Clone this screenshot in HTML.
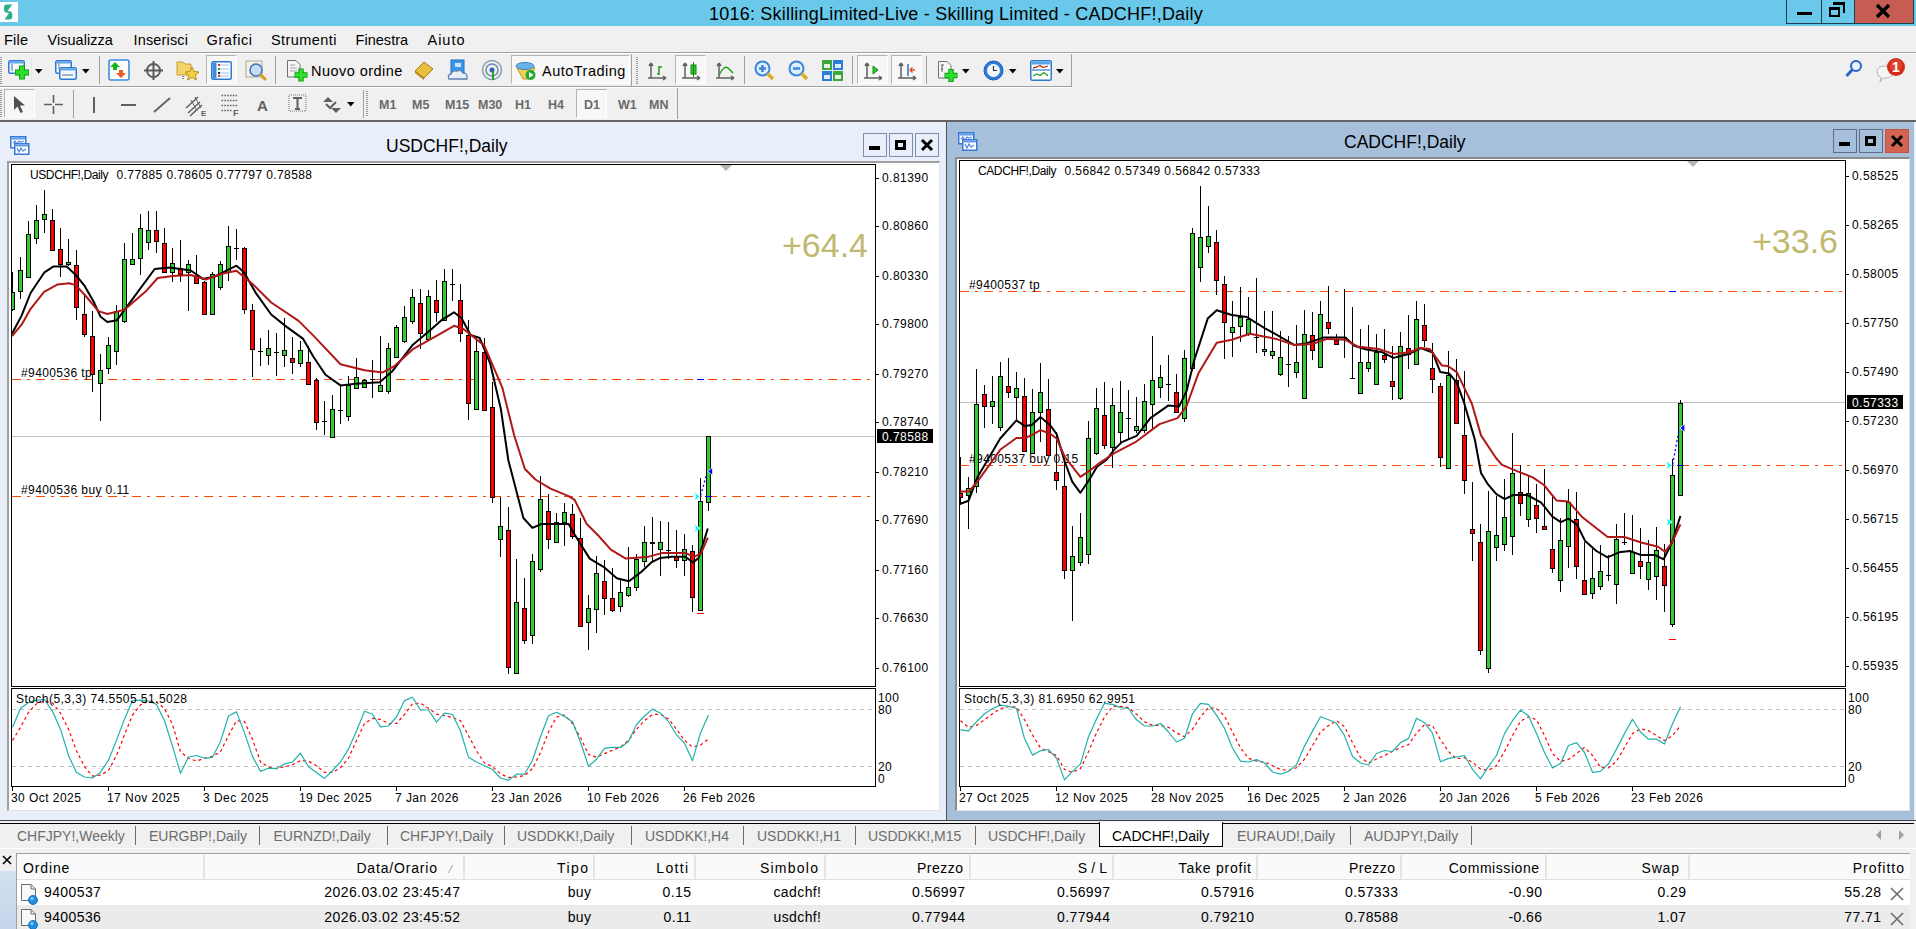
<!DOCTYPE html>
<html><head><meta charset="utf-8">
<style>
*{margin:0;padding:0;box-sizing:border-box}
html,body{width:1916px;height:929px;overflow:hidden;background:#F0F0F0;font-family:"Liberation Sans",sans-serif;color:#000}
.a{position:absolute}
.menu span{position:absolute;top:31.5px;font-size:14.5px;line-height:16px}
.tf{position:absolute;top:98px;font-size:12.5px;font-weight:bold;color:#6A6A6A;line-height:14px}
.ax{font-family:"Liberation Sans",sans-serif;font-size:12px;fill:#000;letter-spacing:0.45px}
.big{font-family:"Liberation Sans",sans-serif;font-size:34px;fill:#C0B970}
.ol{font-family:"Liberation Sans",sans-serif;font-size:12px;fill:#000;letter-spacing:0.4px}
.tab{position:absolute;top:828px;font-size:14px;line-height:16px;color:#6D6D6D}
.tsep{position:absolute;top:826px;width:1px;height:19px;background:#6D6D6D}
.th{position:absolute;top:860px;font-size:14px;line-height:16px;text-align:right}
.td{position:absolute;font-size:14px;line-height:16px;text-align:right}
.csep{position:absolute;top:855px;width:2px;height:24px;background:#E4E4E4}
.sep{position:absolute;width:1px;background:#A0A0A0}
.wbtn{position:absolute;width:24px;height:24px;border:1px solid #7F8DA8}
</style></head><body>
<!-- title bar -->
<div class="a" style="left:0;top:0;width:1916px;height:26px;background:#6AC9EA"></div>
<div class="a" style="left:0;top:2px;width:18px;height:20px;background:#fff"></div>
<svg class="a" style="left:0;top:0" width="20" height="26"><path d="M12.3,4.5 L7,4.5 Q4,4.5 4,7.5 L4,10 Q4,12 6,12.5 L9,13 L4.5,19.5 L9.5,19.5 Q12.3,19.5 12.3,16.5 L12.3,14 Q12.3,12 10.5,11.5 L7.5,11 Z" fill="#2BB08C"/></svg>
<div class="a" style="left:709px;top:4px;font-size:18px;line-height:20px;white-space:nowrap;letter-spacing:0.21px">1016: SkillingLimited-Live - Skilling Limited - CADCHF!,Daily</div>
<div class="a" style="left:1786px;top:0;width:36px;height:24px;border:1px solid #1F3F4F;border-top:0;background:#6AC9EA"></div>
<div class="a" style="left:1797px;top:12px;width:15px;height:3px;background:#000"></div>
<div class="a" style="left:1821px;top:0;width:33px;height:24px;border-bottom:1px solid #1F3F4F;border-left:1px solid #1F3F4F;background:#6AC9EA"></div>
<div class="a" style="left:1829px;top:7px;width:11px;height:10px;border:2px solid #000;border-top-width:3px"></div>
<div class="a" style="left:1833px;top:2px;width:12px;height:11px;border:2px solid #000;border-left:0;border-bottom:0;border-top-width:3px"></div>
<div class="a" style="left:1854px;top:0;width:60px;height:24px;background:#C65C52;border:1px solid #1F3F4F;border-top:0"></div>
<svg class="a" style="left:1874px;top:2px" width="18" height="18"><path d="M3,3 L15,15 M15,3 L3,15" stroke="#000" stroke-width="3.4"/></svg>
<!-- menu -->
<div class="menu"><span style="left:4.0px;letter-spacing:0.26px">File</span><span style="left:47.5px;letter-spacing:0.03px">Visualizza</span><span style="left:133.5px;letter-spacing:0.16px">Inserisci</span><span style="left:206.5px;letter-spacing:0.61px">Grafici</span><span style="left:271.0px;letter-spacing:0.43px">Strumenti</span><span style="left:355.5px;letter-spacing:0.04px">Finestra</span><span style="left:427.5px;letter-spacing:0.98px">Aiuto</span></div>
<div class="a" style="left:0;top:52px;width:1916px;height:1px;background:#A0A0A0"></div>
<div class="a" style="left:0;top:53px;width:1916px;height:1px;background:#FFF"></div>
<div class="a" style="left:0;top:86px;width:1072px;height:1px;background:#A0A0A0"></div>
<div class="a" style="left:0;top:87px;width:1072px;height:1px;background:#FFF"></div>
<div class="a" style="left:1071px;top:54px;width:1px;height:33px;background:#A0A0A0"></div>
<div class="a" style="left:677px;top:88px;width:1px;height:31px;background:#A0A0A0"></div>
<!-- TOOLBAR1 -->
<div class="a" style="left:0px;top:57px;width:2px;height:27px;background:repeating-linear-gradient(#9A9A9A 0 1px,transparent 1px 2px)"></div>
<svg class="a" style="left:8px;top:59px" width="24" height="22" viewBox="0 0 24 22"><rect x="0.75" y="1.75" width="15.5" height="12.5" rx="1.5" fill="#F4F8FC" stroke="#2B7BD0" stroke-width="1.5"/><rect x="1.5" y="2.5" width="14" height="2" fill="#5FA5E8"/><path d="M4,5 V12" stroke="#7C9CC0" stroke-width="1.5"/><path d="M7.0,13.5 H21.0 M14,6.5 V20.5" stroke="#0B9A0B" stroke-width="5.9" fill="none"/><path d="M7.7,13.5 H20.3 M14,7.2 V19.8" stroke="#2EE02E" stroke-width="3.9" fill="none"/></svg>
<svg class="a" style="left:35px;top:69px" width="8" height="5" viewBox="0 0 8 5"><path d="M0,0 L7.5,0 L3.75,4.5 Z" fill="#000"/></svg>
<div class="a" style="left:31px;top:58px;width:1px;height:24px;background:#DCE8F5"></div>
<svg class="a" style="left:55px;top:59px" width="23" height="22" viewBox="0 0 23 22"><rect x="0.75" y="1.75" width="15.5" height="12.5" rx="1.5" fill="#F4F8FC" stroke="#2B7BD0" stroke-width="1.5"/><rect x="1.5" y="2.5" width="14" height="2" fill="#5FA5E8"/><path d="M4,4 V10 H14" stroke="#7C9CC0" stroke-width="1.2" fill="none"/><rect x="4.75" y="8.75" width="16.5" height="11.5" rx="1.5" fill="#F4F8FC" stroke="#2B7BD0" stroke-width="1.5"/><rect x="5.5" y="9.5" width="15" height="2" fill="#5FA5E8"/><path d="M7,16 H18" stroke="#7C9CC0" stroke-width="1.5"/></svg>
<svg class="a" style="left:82px;top:69px" width="8" height="5" viewBox="0 0 8 5"><path d="M0,0 L7.5,0 L3.75,4.5 Z" fill="#000"/></svg>
<div class="a" style="left:99px;top:56px;width:1px;height:28px;background:#A0A0A0"></div>
<svg class="a" style="left:108px;top:59px" width="22" height="22" viewBox="0 0 22 22"><rect x="1" y="1" width="20" height="20" rx="2" fill="#fff" stroke="#3C8CE0" stroke-width="1.6"/><path d="M7,3 L12,8 H9 V11 H5 V8 H2 Z" fill="#18B418"/><path d="M13,19 L18,14 H15 V11 H11 V14 H8 Z" fill="#F05A28"/></svg>
<svg class="a" style="left:143px;top:60px" width="21" height="21" viewBox="0 0 21 21"><circle cx="10.5" cy="10.5" r="6.5" fill="none" stroke="#5A5A5A" stroke-width="2"/><path d="M10.5,1 V20 M1,10.5 H20" stroke="#5A5A5A" stroke-width="2"/></svg>
<svg class="a" style="left:176px;top:59px" width="24" height="22" viewBox="0 0 24 22"><path d="M1,3 H7 L9,5 H15 V16 H1 Z" fill="#F3D46A" stroke="#C8A030"/><path d="M16,8 L18,12.5 L23,13 L19.3,16.2 L20.4,21 L16,18.5 L11.6,21 L12.7,16.2 L9,13 L14,12.5 Z" fill="#F5D040" stroke="#B8901A"/><path d="M7,17 V21" stroke="#333" stroke-dasharray="1,1"/></svg>
<div class="a" style="left:206px;top:55px;width:31px;height:29px;border:1px solid #B4B4B4;border-right-color:#fff;border-bottom-color:#fff;background:#F7F7F7"></div>
<svg class="a" style="left:211px;top:61px" width="21" height="19" viewBox="0 0 21 19"><rect x="0.75" y="0.75" width="19.5" height="17.5" rx="1.5" fill="#fff" stroke="#2B7BD0" stroke-width="1.5"/><rect x="1.5" y="1.5" width="4" height="16" fill="#3D8BDB"/><path d="M8,4 H18 M8,8 H18 M8,12 H18 M8,15 H18" stroke="#9CC4EE" stroke-width="1"/><rect x="7" y="3" width="2" height="2" fill="#E03030"/><rect x="7" y="7" width="2" height="2" fill="#28A028"/><rect x="7" y="11" width="2" height="2" fill="#222"/><rect x="7" y="14" width="2" height="2" fill="#E03030"/></svg>
<svg class="a" style="left:245px;top:59px" width="24" height="24" viewBox="0 0 24 24"><rect x="1" y="2" width="16" height="16" fill="#F4F0E6" stroke="#B0A890"/><circle cx="11" cy="11" r="6" fill="#C8DCF4" stroke="#3C78C8" stroke-width="1.6"/><path d="M15,15 L21,21" stroke="#D2A020" stroke-width="3"/></svg>
<div class="a" style="left:275px;top:56px;width:1px;height:28px;background:#A0A0A0"></div>
<svg class="a" style="left:286px;top:59px" width="22" height="24" viewBox="0 0 22 24"><path d="M1.5,1.5 H10 L14,5.5 V18 H1.5 Z" fill="#F6F6F6" stroke="#707070"/><path d="M4,6 H9 M4,9 H11 M4,12 H11" stroke="#A0A0A0"/><path d="M8.5,16 H21.5 M15,9.5 V22.5" stroke="#0B9A0B" stroke-width="5.4" fill="none"/><path d="M9.2,16 H20.8 M15,10.2 V21.8" stroke="#2EE02E" stroke-width="3.4" fill="none"/></svg>
<div class="a" style="left:311px;top:62.5px;font-size:14.5px;line-height:16px;white-space:nowrap;letter-spacing:0.46px">Nuovo ordine</div>
<svg class="a" style="left:413px;top:60px" width="22" height="21" viewBox="0 0 22 21"><path d="M2,11 L11,2 L20,9 L11,18 Z" fill="#E8C040" stroke="#A87818"/><path d="M2,11 L11,18 L11,20 L2,13 Z" fill="#B88420"/></svg>
<svg class="a" style="left:447px;top:59px" width="22" height="22" viewBox="0 0 22 22"><rect x="4" y="1" width="13" height="13" fill="#3C96E8" stroke="#1E6EC0"/><rect x="8" y="4" width="6" height="4" fill="#C8E4FA"/><path d="M2,20 Q0,16 4,15 Q5,11 10,12 Q14,10 16,14 Q21,14 20,20 Z" fill="#E8EEF6" stroke="#5A82B4" stroke-width="1.3"/></svg>
<svg class="a" style="left:481px;top:59px" width="22" height="22" viewBox="0 0 22 22"><circle cx="11" cy="11" r="9.5" fill="none" stroke="#8AA0B4" stroke-width="1.5"/><circle cx="11" cy="11" r="6" fill="none" stroke="#6C8CB0" stroke-width="1.5"/><circle cx="11" cy="11" r="2.5" fill="#2A60C0"/><path d="M12,12 V21" stroke="#28A028" stroke-width="2"/></svg>
<div class="a" style="left:511px;top:55px;width:119px;height:29px;border:1px solid #B4B4B4;border-right-color:#fff;border-bottom-color:#fff;background:#F7F7F7"></div>
<svg class="a" style="left:515px;top:59px" width="22" height="22" viewBox="0 0 22 22"><path d="M2,9 Q11,3 20,9 L14,20 H8 Z" fill="#F0D050" stroke="#B89830"/><ellipse cx="10" cy="7" rx="9" ry="3.5" fill="#6CB4E8" stroke="#3C84C0"/><circle cx="15.5" cy="16" r="5" fill="#20A830"/><path d="M14,13 L18.5,16 L14,19 Z" fill="#fff"/></svg>
<div class="a" style="left:542px;top:62.5px;font-size:14.5px;line-height:16px;white-space:nowrap;letter-spacing:0.49px">AutoTrading</div>
<div class="a" style="left:631px;top:54px;width:1px;height:32px;background:#A0A0A0"></div>
<div class="a" style="left:636px;top:57px;width:2px;height:27px;background:repeating-linear-gradient(#9A9A9A 0 1px,transparent 1px 2px)"></div>
<svg class="a" style="left:648px;top:62px" width="19" height="19" viewBox="0 0 19 19"><path d="M3,1 V16 M0,16 H18 M3,1 L1,4 M3,1 L5,4 M18,16 L15,14 M18,16 L15,18" stroke="#606060" stroke-width="1.5" fill="none"/><path d="M11,4 V13 M9,12 H11 M11,5 H14" stroke="#20A020" stroke-width="1.5" fill="none"/></svg>
<div class="a" style="left:675px;top:55px;width:31px;height:29px;border:1px solid #B4B4B4;border-right-color:#fff;border-bottom-color:#fff;background:#F7F7F7"></div>
<svg class="a" style="left:682px;top:62px" width="19" height="19" viewBox="0 0 19 19"><path d="M3,1 V16 M0,16 H18 M3,1 L1,4 M3,1 L5,4 M18,16 L15,14 M18,16 L15,18" stroke="#606060" stroke-width="1.5" fill="none"/><rect x="9" y="3" width="5" height="9" fill="#30D030" stroke="#108010"/><path d="M11.5,0 V15" stroke="#108010" stroke-width="1"/></svg>
<svg class="a" style="left:716px;top:62px" width="19" height="19" viewBox="0 0 19 19"><path d="M3,1 V16 M0,16 H18 M3,1 L1,4 M3,1 L5,4 M18,16 L15,14 M18,16 L15,18" stroke="#606060" stroke-width="1.5" fill="none"/><path d="M3,13 Q8,3 12,6 L17,11" stroke="#20A020" stroke-width="1.5" fill="none"/></svg>
<div class="a" style="left:744px;top:56px;width:1px;height:28px;background:#A0A0A0"></div>
<svg class="a" style="left:754px;top:60px" width="21" height="21" viewBox="0 0 21 21"><circle cx="8.5" cy="8.5" r="7" fill="#DCEEFF" stroke="#3A86D8" stroke-width="2"/><path d="M13.5,13.5 L19,19" stroke="#D8AE28" stroke-width="3.5"/><path d="M5,8.5 H12" stroke="#3A86D8" stroke-width="2.5"/><path d="M8.5,5 V12" stroke="#3A86D8" stroke-width="2.5"/></svg>
<svg class="a" style="left:788px;top:60px" width="21" height="21" viewBox="0 0 21 21"><circle cx="8.5" cy="8.5" r="7" fill="#DCEEFF" stroke="#3A86D8" stroke-width="2"/><path d="M13.5,13.5 L19,19" stroke="#D8AE28" stroke-width="3.5"/><path d="M5,8.5 H12" stroke="#3A86D8" stroke-width="2.5"/></svg>
<svg class="a" style="left:822px;top:60px" width="21" height="21" viewBox="0 0 21 21"><rect x="0" y="0" width="10" height="10" fill="#3CA83C"/><rect x="11" y="0" width="10" height="10" fill="#2A7ED8"/><rect x="0" y="11" width="10" height="10" fill="#2A7ED8"/><rect x="11" y="11" width="10" height="10" fill="#3CA83C"/><rect x="2" y="4" width="6" height="4" fill="#E8F4E8"/><rect x="13" y="4" width="6" height="4" fill="#E0ECF8"/><rect x="2" y="15" width="6" height="4" fill="#E0ECF8"/><rect x="13" y="15" width="6" height="4" fill="#E8F4E8"/></svg>
<div class="a" style="left:852px;top:56px;width:1px;height:28px;background:#A0A0A0"></div>
<div class="a" style="left:857px;top:55px;width:31px;height:29px;border:1px solid #B4B4B4;border-right-color:#fff;border-bottom-color:#fff;background:#F7F7F7"></div>
<svg class="a" style="left:864px;top:62px" width="19" height="19" viewBox="0 0 19 19"><path d="M3,1 V16 M0,16 H18 M3,1 L1,4 M3,1 L5,4 M18,16 L15,14 M18,16 L15,18" stroke="#606060" stroke-width="1.5" fill="none"/><path d="M9,4 L14,8 L9,12 Z" fill="#30C030" stroke="#109010"/></svg>
<div class="a" style="left:891px;top:55px;width:31px;height:29px;border:1px solid #B4B4B4;border-right-color:#fff;border-bottom-color:#fff;background:#F7F7F7"></div>
<svg class="a" style="left:898px;top:62px" width="19" height="19" viewBox="0 0 19 19"><path d="M3,1 V16 M0,16 H18 M3,1 L1,4 M3,1 L5,4 M18,16 L15,14 M18,16 L15,18" stroke="#606060" stroke-width="1.5" fill="none"/><path d="M10,2 V14" stroke="#2A6EC8" stroke-width="1.5"/><path d="M17,8 H12 M12,8 L14.5,5.5 M12,8 L14.5,10.5" stroke="#E85020" stroke-width="1.6" fill="none"/></svg>
<div class="a" style="left:926px;top:56px;width:1px;height:28px;background:#A0A0A0"></div>
<svg class="a" style="left:937px;top:60px" width="22" height="23" viewBox="0 0 22 23"><path d="M1.5,1.5 H10 L14,5.5 V18 H1.5 Z" fill="#F6F6F6" stroke="#707070"/><path d="M5,5 V12 M4,5 H7 M4,9 H6" stroke="#606060"/><path d="M7.5,15.5 H20.5 M14,9.0 V22.0" stroke="#0B9A0B" stroke-width="5.4" fill="none"/><path d="M8.2,15.5 H19.8 M14,9.7 V21.3" stroke="#2EE02E" stroke-width="3.4" fill="none"/></svg>
<svg class="a" style="left:962px;top:69px" width="8" height="5" viewBox="0 0 8 5"><path d="M0,0 L7.5,0 L3.75,4.5 Z" fill="#000"/></svg>
<svg class="a" style="left:983px;top:60px" width="21" height="21" viewBox="0 0 21 21"><circle cx="10.5" cy="10.5" r="9.5" fill="#2A7ED8" stroke="#1A5AA8"/><circle cx="10.5" cy="10.5" r="6.5" fill="#F4F8FC"/><path d="M10.5,6 V10.5 H14" stroke="#333" stroke-width="1.2" fill="none"/></svg>
<svg class="a" style="left:1009px;top:69px" width="8" height="5" viewBox="0 0 8 5"><path d="M0,0 L7.5,0 L3.75,4.5 Z" fill="#000"/></svg>
<svg class="a" style="left:1030px;top:60px" width="22" height="21" viewBox="0 0 22 21"><rect x="0.75" y="0.75" width="20.5" height="19.5" rx="1.5" fill="#fff" stroke="#2B7BD0" stroke-width="1.5"/><rect x="1.5" y="1.5" width="19" height="3" fill="#5FA5E8"/><path d="M2,10 H20" stroke="#2B7BD0" stroke-width="1.2"/><path d="M3,8 L7,7 L10,5.5 L13,7.5 L18,6" stroke="#B03010" stroke-width="1.3" fill="none"/><path d="M3,16 L7,14 L10,15.5 L14,12.5 L18,16" stroke="#20A020" stroke-width="1.3" fill="none"/></svg>
<svg class="a" style="left:1056px;top:69px" width="8" height="5" viewBox="0 0 8 5"><path d="M0,0 L7.5,0 L3.75,4.5 Z" fill="#000"/></svg>
<svg class="a" style="left:1844px;top:59px" width="20" height="20" viewBox="0 0 20 20"><circle cx="12" cy="7" r="5" fill="#EAF2FC" stroke="#2A64C8" stroke-width="2"/><path d="M8.5,10.5 L2.5,17" stroke="#2A64C8" stroke-width="3"/></svg>
<svg class="a" style="left:1874px;top:54px" width="36" height="32" viewBox="0 0 36 32"><path d="M3,18 Q3,12 11,12 Q19,12 19,18 Q19,24 11,24 L9,24 L6,28 L7,23.5 Q3,22 3,18 Z" fill="#F6F6F6" stroke="#B4B4B4"/><circle cx="22" cy="13" r="9" fill="#D42A1C"/><circle cx="22" cy="11.5" r="6" fill="#E8503C" opacity="0.6"/><text x="22" y="18" text-anchor="middle" style="font-family:Liberation Sans,sans-serif;font-size:14px;font-weight:bold;fill:#fff">1</text></svg>
<!-- TOOLBAR2 -->
<div class="a" style="left:0px;top:90px;width:2px;height:28px;background:repeating-linear-gradient(#9A9A9A 0 1px,transparent 1px 2px)"></div>
<div class="a" style="left:4px;top:89px;width:31px;height:29px;border:1px solid #B4B4B4;border-right-color:#fff;border-bottom-color:#fff;background:#F7F7F7"></div>
<svg class="a" style="left:13px;top:95px" width="13" height="19" viewBox="0 0 13 19"><path d="M1,1 L1,15 L4.5,11.5 L7.5,18 L10,17 L7,10.5 L12,10.5 Z" fill="#505050"/></svg>
<svg class="a" style="left:44px;top:95px" width="20" height="20" viewBox="0 0 20 20"><path d="M9.5,0 V8 M9.5,11 V19 M0,9.5 H8 M11,9.5 H19" stroke="#606060" stroke-width="1.6"/></svg>
<div class="a" style="left:73px;top:90px;width:1px;height:28px;background:#A0A0A0"></div>
<div class="a" style="left:93px;top:97px;width:2px;height:16px;background:#606060"></div>
<div class="a" style="left:121px;top:104px;width:15px;height:2px;background:#606060"></div>
<svg class="a" style="left:153px;top:97px" width="18" height="16" viewBox="0 0 18 16"><path d="M1,15 L17,1" stroke="#606060" stroke-width="1.8"/></svg>
<svg class="a" style="left:185px;top:94px" width="23" height="23" viewBox="0 0 23 23"><path d="M1,14 L13,3 M3,19 L15,8 M5,22 L17,11" stroke="#606060" stroke-width="1.5"/><path d="M6,6 L12,17 M10,3 L16,14" stroke="#606060" stroke-width="1"/><text x="16" y="22" style="font-family:Liberation Sans,sans-serif;font-size:8px;font-weight:bold;fill:#606060">E</text></svg>
<svg class="a" style="left:220px;top:94px" width="21" height="23" viewBox="0 0 21 23"><path d="M1.5,1.5 H18 M1.5,6.5 H18 M1.5,11.5 H18 M1.5,16.5 H12" stroke="#666" stroke-width="1.6" stroke-dasharray="1.6,1.2"/><text x="13" y="21.5" style="font-family:Liberation Sans,sans-serif;font-size:9px;font-weight:bold;fill:#606060">F</text></svg>
<svg class="a" style="left:257px;top:99px" width="14" height="13" viewBox="0 0 14 13"><text x="0" y="12" style="font-family:Liberation Sans,sans-serif;font-size:15px;font-weight:bold;fill:#606060">A</text></svg>
<svg class="a" style="left:288px;top:94px" width="20" height="19" viewBox="0 0 20 19"><rect x="1" y="1" width="17" height="16" fill="none" stroke="#707070" stroke-dasharray="1,1"/><path d="M5,4 H14 M9.5,4 V15 M7,15 H12" stroke="#606060" stroke-width="2"/></svg>
<svg class="a" style="left:322px;top:95px" width="20" height="20" viewBox="0 0 20 20"><path d="M1,7 L6,2 L11,7 Z" fill="#606060"/><path d="M9,18 L14,13 L19,18 Z" fill="#606060" transform="rotate(180 14 15.5)"/><path d="M4,9 L8,13 L14,7" stroke="#606060" stroke-width="2" fill="none"/></svg>
<svg class="a" style="left:347px;top:102px" width="8" height="5" viewBox="0 0 8 5"><path d="M0,0 L7.5,0 L3.75,4.5 Z" fill="#000"/></svg>
<div class="a" style="left:363px;top:90px;width:1px;height:28px;background:#A0A0A0"></div>
<div class="a" style="left:366px;top:91px;width:2px;height:26px;background:repeating-linear-gradient(#9A9A9A 0 1px,transparent 1px 2px)"></div>
<div class="tf" style="left:379px">M1</div>
<div class="tf" style="left:412px">M5</div>
<div class="tf" style="left:445px">M15</div>
<div class="tf" style="left:478px">M30</div>
<div class="tf" style="left:515px">H1</div>
<div class="tf" style="left:548px">H4</div>
<div class="a" style="left:576px;top:89px;width:31px;height:29px;border:1px solid #B4B4B4;border-right-color:#fff;border-bottom-color:#fff;background:#F7F7F7"></div>
<div class="tf" style="left:584px">D1</div>
<div class="tf" style="left:618px">W1</div>
<div class="tf" style="left:649px">MN</div>
<div class="a" style="left:0;top:120px;width:1916px;height:2px;background:#646464"></div>

<!-- LEFT WINDOW -->
<div class="a" style="left:0;top:122px;width:946px;height:698px;background:#E8EEFA"></div>
<div class="a" style="left:946px;top:122px;width:1px;height:698px;background:#505050"></div>
<svg class="a" style="left:10px;top:136px" width="20" height="20"><rect x="0.75" y="0.75" width="15" height="11" fill="#fff" stroke="#3A78D8" stroke-width="1.5"/><rect x="1.5" y="1.5" width="13.5" height="2" fill="#5C9AEA"/><path d="M3,7 L5,5 L7,8 L9,5 L11,6 L14,5" stroke="#5A8AE0" stroke-width="1.3" fill="none"/><rect x="4.75" y="7.75" width="14" height="10.5" fill="#fff" stroke="#3A78D8" stroke-width="1.5"/><rect x="5.5" y="8.5" width="12.5" height="2" fill="#5C9AEA"/><path d="M7,12 L9,16 L11,12 L13,15 L16,13" stroke="#5A8AE0" stroke-width="1.3" fill="none"/></svg>
<div class="a" style="left:386px;top:137px;font-size:17.5px;line-height:19px">USDCHF!,Daily</div>
<div class="wbtn" style="left:863px;top:133px"></div>
<div class="a" style="left:869px;top:146px;width:11px;height:4px;background:#000"></div>
<div class="wbtn" style="left:889px;top:133px"></div>
<div class="a" style="left:895px;top:140px;width:11px;height:10px;border:3px solid #000"></div>
<div class="wbtn" style="left:915px;top:133px"></div>
<svg class="a" style="left:915px;top:133px" width="24" height="24"><path d="M7,7 L17,17 M17,7 L7,17" stroke="#000" stroke-width="3"/></svg>
<div class="a" style="left:7px;top:161px;width:933px;height:650px;background:#fff;border-top:2px solid #A0A0A0;border-left:2px solid #A0A0A0;border-right:1px solid #E3E3E3;border-bottom:1px solid #E3E3E3"></div>

<!-- RIGHT WINDOW -->
<div class="a" style="left:947px;top:122px;width:967px;height:698px;background:#A6BFDB"></div>
<div class="a" style="left:1914px;top:122px;width:2px;height:698px;background:#F0F0F0"></div>
<svg class="a" style="left:958px;top:132px" width="20" height="20"><rect x="0.75" y="0.75" width="15" height="11" fill="#fff" stroke="#3A78D8" stroke-width="1.5"/><rect x="1.5" y="1.5" width="13.5" height="2" fill="#5C9AEA"/><path d="M3,7 L5,5 L7,8 L9,5 L11,6 L14,5" stroke="#5A8AE0" stroke-width="1.3" fill="none"/><rect x="4.75" y="7.75" width="14" height="10.5" fill="#fff" stroke="#3A78D8" stroke-width="1.5"/><rect x="5.5" y="8.5" width="12.5" height="2" fill="#5C9AEA"/><path d="M7,12 L9,16 L11,12 L13,15 L16,13" stroke="#5A8AE0" stroke-width="1.3" fill="none"/></svg>
<div class="a" style="left:1344px;top:133px;font-size:17.5px;line-height:19px">CADCHF!,Daily</div>
<div class="wbtn" style="left:1833px;top:129px;border-color:#5D6F88"></div>
<div class="a" style="left:1839px;top:142px;width:11px;height:4px;background:#000"></div>
<div class="wbtn" style="left:1859px;top:129px;border-color:#5D6F88"></div>
<div class="a" style="left:1865px;top:136px;width:11px;height:10px;border:3px solid #000"></div>
<div class="wbtn" style="left:1885px;top:129px;border-color:#C4533F;background:#D26451"></div>
<svg class="a" style="left:1885px;top:129px" width="24" height="24"><path d="M7,7 L17,17 M17,7 L7,17" stroke="#000" stroke-width="3"/></svg>
<div class="a" style="left:955px;top:157px;width:955px;height:654px;background:#fff;border-top:2px solid #8C8C8C;border-left:2px solid #8C8C8C;border-right:1px solid #E3E3E3;border-bottom:1px solid #E3E3E3"></div>

<svg class="a" style="left:0;top:0" width="1916" height="929">
<rect x="11.5" y="164.5" width="864" height="522" fill="none" stroke="#000" stroke-width="1"/><rect x="11.5" y="688.5" width="864" height="98" fill="none" stroke="#000" stroke-width="1"/><rect x="875" y="178" width="4" height="1" fill="#000"/><text x="882" y="181.7" class="ax">0.81390</text><rect x="875" y="226" width="4" height="1" fill="#000"/><text x="882" y="229.7" class="ax">0.80860</text><rect x="875" y="276" width="4" height="1" fill="#000"/><text x="882" y="279.7" class="ax">0.80330</text><rect x="875" y="324" width="4" height="1" fill="#000"/><text x="882" y="327.7" class="ax">0.79800</text><rect x="875" y="374" width="4" height="1" fill="#000"/><text x="882" y="377.7" class="ax">0.79270</text><rect x="875" y="422" width="4" height="1" fill="#000"/><text x="882" y="425.7" class="ax">0.78740</text><rect x="875" y="472" width="4" height="1" fill="#000"/><text x="882" y="475.7" class="ax">0.78210</text><rect x="875" y="520" width="4" height="1" fill="#000"/><text x="882" y="523.7" class="ax">0.77690</text><rect x="875" y="570" width="4" height="1" fill="#000"/><text x="882" y="573.7" class="ax">0.77160</text><rect x="875" y="618" width="4" height="1" fill="#000"/><text x="882" y="621.7" class="ax">0.76630</text><rect x="875" y="668" width="4" height="1" fill="#000"/><text x="882" y="671.7" class="ax">0.76100</text><rect x="12" y="436" width="863" height="1" fill="#C0C0C0"/><rect x="877" y="429" width="56" height="14" fill="#000"/><text x="882" y="440.5" class="ax" style="fill:#fff">0.78588</text><line x1="12" y1="379.5" x2="875" y2="379.5" stroke="#FF4500" stroke-width="1" stroke-dasharray="9,6,3,6" shape-rendering="crispEdges"/><text x="21" y="377" class="ol">#9400536 tp</text><line x1="12" y1="496.5" x2="875" y2="496.5" stroke="#FF4500" stroke-width="1" stroke-dasharray="9,6,3,6" shape-rendering="crispEdges"/><text x="21" y="494" class="ol">#9400536 buy 0.11</text><text x="868" y="257" text-anchor="end" class="big">+64.4</text><clipPath id="clipL"><rect x="12" y="165" width="863" height="521"/></clipPath><g shape-rendering="crispEdges" clip-path="url(#clipL)"><rect x="12" y="272" width="1" height="39" fill="#000"/><rect x="10" y="292" width="5" height="18" fill="#000"/><rect x="11" y="293" width="3" height="16" fill="#32CD32"/><rect x="20" y="257" width="1" height="42" fill="#000"/><rect x="18" y="270" width="5" height="22" fill="#000"/><rect x="19" y="271" width="3" height="20" fill="#32CD32"/><rect x="28" y="221" width="1" height="57" fill="#000"/><rect x="26" y="234" width="5" height="44" fill="#000"/><rect x="27" y="235" width="3" height="42" fill="#32CD32"/><rect x="36" y="205" width="1" height="39" fill="#000"/><rect x="34" y="220" width="5" height="19" fill="#000"/><rect x="35" y="221" width="3" height="17" fill="#32CD32"/><rect x="44" y="190" width="1" height="43" fill="#000"/><rect x="42" y="214" width="5" height="6" fill="#000"/><rect x="43" y="215" width="3" height="4" fill="#32CD32"/><rect x="52" y="209" width="1" height="42" fill="#000"/><rect x="50" y="220" width="5" height="31" fill="#000"/><rect x="51" y="221" width="3" height="29" fill="#FF0000"/><rect x="60" y="228" width="1" height="49" fill="#000"/><rect x="58" y="249" width="5" height="16" fill="#000"/><rect x="59" y="250" width="3" height="14" fill="#FF0000"/><rect x="68" y="239" width="1" height="27" fill="#000"/><rect x="66" y="262" width="5" height="3" fill="#000"/><rect x="67" y="263" width="3" height="1" fill="#32CD32"/><rect x="76" y="250" width="1" height="70" fill="#000"/><rect x="74" y="265" width="5" height="43" fill="#000"/><rect x="75" y="266" width="3" height="41" fill="#FF0000"/><rect x="84" y="295" width="1" height="42" fill="#000"/><rect x="82" y="314" width="5" height="21" fill="#000"/><rect x="83" y="315" width="3" height="19" fill="#FF0000"/><rect x="92" y="311" width="1" height="81" fill="#000"/><rect x="90" y="336" width="5" height="39" fill="#000"/><rect x="91" y="337" width="3" height="37" fill="#FF0000"/><rect x="100" y="354" width="1" height="67" fill="#000"/><rect x="98" y="370" width="5" height="14" fill="#000"/><rect x="99" y="371" width="3" height="12" fill="#32CD32"/><rect x="108" y="337" width="1" height="37" fill="#000"/><rect x="106" y="345" width="5" height="24" fill="#000"/><rect x="107" y="346" width="3" height="22" fill="#32CD32"/><rect x="116" y="305" width="1" height="60" fill="#000"/><rect x="114" y="311" width="5" height="41" fill="#000"/><rect x="115" y="312" width="3" height="39" fill="#32CD32"/><rect x="124" y="243" width="1" height="80" fill="#000"/><rect x="122" y="259" width="5" height="63" fill="#000"/><rect x="123" y="260" width="3" height="61" fill="#32CD32"/><rect x="132" y="233" width="1" height="32" fill="#000"/><rect x="130" y="259" width="5" height="6" fill="#000"/><rect x="131" y="260" width="3" height="4" fill="#32CD32"/><rect x="140" y="214" width="1" height="61" fill="#000"/><rect x="138" y="228" width="5" height="31" fill="#000"/><rect x="139" y="229" width="3" height="29" fill="#32CD32"/><rect x="148" y="211" width="1" height="39" fill="#000"/><rect x="146" y="230" width="5" height="13" fill="#000"/><rect x="147" y="231" width="3" height="11" fill="#32CD32"/><rect x="156" y="211" width="1" height="42" fill="#000"/><rect x="154" y="230" width="5" height="12" fill="#000"/><rect x="155" y="231" width="3" height="10" fill="#FF0000"/><rect x="164" y="228" width="1" height="45" fill="#000"/><rect x="162" y="243" width="5" height="30" fill="#000"/><rect x="163" y="244" width="3" height="28" fill="#FF0000"/><rect x="172" y="248" width="1" height="34" fill="#000"/><rect x="170" y="263" width="5" height="10" fill="#000"/><rect x="171" y="264" width="3" height="8" fill="#32CD32"/><rect x="180" y="240" width="1" height="42" fill="#000"/><rect x="178" y="268" width="5" height="7" fill="#000"/><rect x="179" y="269" width="3" height="5" fill="#FF0000"/><rect x="188" y="260" width="1" height="51" fill="#000"/><rect x="186" y="264" width="5" height="9" fill="#000"/><rect x="187" y="265" width="3" height="7" fill="#32CD32"/><rect x="196" y="255" width="1" height="29" fill="#000"/><rect x="194" y="276" width="5" height="8" fill="#000"/><rect x="195" y="277" width="3" height="6" fill="#FF0000"/><rect x="204" y="281" width="1" height="34" fill="#000"/><rect x="202" y="282" width="5" height="33" fill="#000"/><rect x="203" y="283" width="3" height="31" fill="#FF0000"/><rect x="212" y="272" width="1" height="43" fill="#000"/><rect x="210" y="274" width="5" height="41" fill="#000"/><rect x="211" y="275" width="3" height="39" fill="#32CD32"/><rect x="220" y="261" width="1" height="29" fill="#000"/><rect x="218" y="264" width="5" height="24" fill="#000"/><rect x="219" y="265" width="3" height="22" fill="#32CD32"/><rect x="228" y="226" width="1" height="55" fill="#000"/><rect x="226" y="246" width="5" height="27" fill="#000"/><rect x="227" y="247" width="3" height="25" fill="#32CD32"/><rect x="236" y="229" width="1" height="31" fill="#000"/><rect x="234" y="248" width="5" height="1" fill="#000"/><rect x="244" y="247" width="1" height="67" fill="#000"/><rect x="242" y="248" width="5" height="62" fill="#000"/><rect x="243" y="249" width="3" height="60" fill="#FF0000"/><rect x="252" y="304" width="1" height="73" fill="#000"/><rect x="250" y="310" width="5" height="40" fill="#000"/><rect x="251" y="311" width="3" height="38" fill="#FF0000"/><rect x="260" y="338" width="1" height="28" fill="#000"/><rect x="258" y="351" width="5" height="1" fill="#000"/><rect x="268" y="330" width="1" height="35" fill="#000"/><rect x="266" y="348" width="5" height="8" fill="#000"/><rect x="267" y="349" width="3" height="6" fill="#32CD32"/><rect x="276" y="333" width="1" height="43" fill="#000"/><rect x="274" y="352" width="5" height="1" fill="#000"/><rect x="284" y="318" width="1" height="49" fill="#000"/><rect x="282" y="350" width="5" height="6" fill="#000"/><rect x="283" y="351" width="3" height="4" fill="#32CD32"/><rect x="292" y="337" width="1" height="37" fill="#000"/><rect x="290" y="358" width="5" height="5" fill="#000"/><rect x="291" y="359" width="3" height="3" fill="#FF0000"/><rect x="300" y="341" width="1" height="26" fill="#000"/><rect x="298" y="350" width="5" height="14" fill="#000"/><rect x="299" y="351" width="3" height="12" fill="#32CD32"/><rect x="308" y="346" width="1" height="39" fill="#000"/><rect x="306" y="362" width="5" height="23" fill="#000"/><rect x="307" y="363" width="3" height="21" fill="#FF0000"/><rect x="316" y="378" width="1" height="52" fill="#000"/><rect x="314" y="380" width="5" height="43" fill="#000"/><rect x="315" y="381" width="3" height="41" fill="#FF0000"/><rect x="324" y="401" width="1" height="34" fill="#000"/><rect x="322" y="421" width="5" height="1" fill="#000"/><rect x="332" y="395" width="1" height="43" fill="#000"/><rect x="330" y="409" width="5" height="29" fill="#000"/><rect x="331" y="410" width="3" height="27" fill="#32CD32"/><rect x="340" y="385" width="1" height="39" fill="#000"/><rect x="338" y="410" width="5" height="1" fill="#000"/><rect x="348" y="376" width="1" height="45" fill="#000"/><rect x="346" y="385" width="5" height="32" fill="#000"/><rect x="347" y="386" width="3" height="30" fill="#32CD32"/><rect x="356" y="358" width="1" height="31" fill="#000"/><rect x="354" y="377" width="5" height="12" fill="#000"/><rect x="355" y="378" width="3" height="10" fill="#32CD32"/><rect x="364" y="379" width="1" height="9" fill="#000"/><rect x="362" y="380" width="5" height="8" fill="#000"/><rect x="363" y="381" width="3" height="6" fill="#32CD32"/><rect x="372" y="360" width="1" height="38" fill="#000"/><rect x="370" y="379" width="5" height="1" fill="#000"/><rect x="380" y="336" width="1" height="56" fill="#000"/><rect x="378" y="385" width="5" height="7" fill="#000"/><rect x="379" y="386" width="3" height="5" fill="#32CD32"/><rect x="388" y="343" width="1" height="51" fill="#000"/><rect x="386" y="348" width="5" height="44" fill="#000"/><rect x="387" y="349" width="3" height="42" fill="#32CD32"/><rect x="396" y="325" width="1" height="33" fill="#000"/><rect x="394" y="327" width="5" height="31" fill="#000"/><rect x="395" y="328" width="3" height="29" fill="#32CD32"/><rect x="404" y="306" width="1" height="37" fill="#000"/><rect x="402" y="317" width="5" height="25" fill="#000"/><rect x="403" y="318" width="3" height="23" fill="#32CD32"/><rect x="412" y="289" width="1" height="35" fill="#000"/><rect x="410" y="297" width="5" height="25" fill="#000"/><rect x="411" y="298" width="3" height="23" fill="#32CD32"/><rect x="420" y="289" width="1" height="60" fill="#000"/><rect x="418" y="303" width="5" height="31" fill="#000"/><rect x="419" y="304" width="3" height="29" fill="#FF0000"/><rect x="428" y="290" width="1" height="51" fill="#000"/><rect x="426" y="296" width="5" height="44" fill="#000"/><rect x="427" y="297" width="3" height="42" fill="#32CD32"/><rect x="436" y="280" width="1" height="42" fill="#000"/><rect x="434" y="300" width="5" height="13" fill="#000"/><rect x="435" y="301" width="3" height="11" fill="#FF0000"/><rect x="444" y="269" width="1" height="52" fill="#000"/><rect x="442" y="281" width="5" height="40" fill="#000"/><rect x="443" y="282" width="3" height="38" fill="#32CD32"/><rect x="452" y="269" width="1" height="32" fill="#000"/><rect x="450" y="284" width="5" height="1" fill="#000"/><rect x="460" y="284" width="1" height="58" fill="#000"/><rect x="458" y="300" width="5" height="34" fill="#000"/><rect x="459" y="301" width="3" height="32" fill="#FF0000"/><rect x="468" y="320" width="1" height="100" fill="#000"/><rect x="466" y="335" width="5" height="69" fill="#000"/><rect x="467" y="336" width="3" height="67" fill="#FF0000"/><rect x="476" y="336" width="1" height="74" fill="#000"/><rect x="474" y="351" width="5" height="59" fill="#000"/><rect x="475" y="352" width="3" height="57" fill="#32CD32"/><rect x="484" y="338" width="1" height="73" fill="#000"/><rect x="482" y="352" width="5" height="59" fill="#000"/><rect x="483" y="353" width="3" height="57" fill="#FF0000"/><rect x="492" y="382" width="1" height="121" fill="#000"/><rect x="490" y="407" width="5" height="91" fill="#000"/><rect x="491" y="408" width="3" height="89" fill="#FF0000"/><rect x="500" y="497" width="1" height="60" fill="#000"/><rect x="498" y="526" width="5" height="14" fill="#000"/><rect x="499" y="527" width="3" height="12" fill="#32CD32"/><rect x="508" y="507" width="1" height="167" fill="#000"/><rect x="506" y="530" width="5" height="138" fill="#000"/><rect x="507" y="531" width="3" height="136" fill="#FF0000"/><rect x="516" y="559" width="1" height="115" fill="#000"/><rect x="514" y="602" width="5" height="72" fill="#000"/><rect x="515" y="603" width="3" height="70" fill="#32CD32"/><rect x="524" y="578" width="1" height="66" fill="#000"/><rect x="522" y="608" width="5" height="33" fill="#000"/><rect x="523" y="609" width="3" height="31" fill="#FF0000"/><rect x="532" y="554" width="1" height="90" fill="#000"/><rect x="530" y="561" width="5" height="75" fill="#000"/><rect x="531" y="562" width="3" height="73" fill="#32CD32"/><rect x="540" y="476" width="1" height="96" fill="#000"/><rect x="538" y="499" width="5" height="71" fill="#000"/><rect x="539" y="500" width="3" height="69" fill="#32CD32"/><rect x="548" y="494" width="1" height="55" fill="#000"/><rect x="546" y="511" width="5" height="29" fill="#000"/><rect x="547" y="512" width="3" height="27" fill="#FF0000"/><rect x="556" y="513" width="1" height="30" fill="#000"/><rect x="554" y="522" width="5" height="21" fill="#000"/><rect x="555" y="523" width="3" height="19" fill="#32CD32"/><rect x="564" y="503" width="1" height="43" fill="#000"/><rect x="562" y="512" width="5" height="11" fill="#000"/><rect x="563" y="513" width="3" height="9" fill="#32CD32"/><rect x="572" y="504" width="1" height="35" fill="#000"/><rect x="570" y="514" width="5" height="23" fill="#000"/><rect x="571" y="515" width="3" height="21" fill="#FF0000"/><rect x="580" y="518" width="1" height="109" fill="#000"/><rect x="578" y="538" width="5" height="89" fill="#000"/><rect x="579" y="539" width="3" height="87" fill="#FF0000"/><rect x="588" y="595" width="1" height="55" fill="#000"/><rect x="586" y="608" width="5" height="15" fill="#000"/><rect x="587" y="609" width="3" height="13" fill="#32CD32"/><rect x="596" y="556" width="1" height="77" fill="#000"/><rect x="594" y="573" width="5" height="37" fill="#000"/><rect x="595" y="574" width="3" height="35" fill="#32CD32"/><rect x="604" y="560" width="1" height="55" fill="#000"/><rect x="602" y="581" width="5" height="18" fill="#000"/><rect x="603" y="582" width="3" height="16" fill="#FF0000"/><rect x="612" y="568" width="1" height="44" fill="#000"/><rect x="610" y="598" width="5" height="13" fill="#000"/><rect x="611" y="599" width="3" height="11" fill="#FF0000"/><rect x="620" y="580" width="1" height="32" fill="#000"/><rect x="618" y="592" width="5" height="15" fill="#000"/><rect x="619" y="593" width="3" height="13" fill="#32CD32"/><rect x="628" y="547" width="1" height="50" fill="#000"/><rect x="626" y="587" width="5" height="9" fill="#000"/><rect x="627" y="588" width="3" height="7" fill="#32CD32"/><rect x="636" y="554" width="1" height="37" fill="#000"/><rect x="634" y="559" width="5" height="29" fill="#000"/><rect x="635" y="560" width="3" height="27" fill="#32CD32"/><rect x="644" y="526" width="1" height="41" fill="#000"/><rect x="642" y="542" width="5" height="20" fill="#000"/><rect x="643" y="543" width="3" height="18" fill="#32CD32"/><rect x="652" y="517" width="1" height="45" fill="#000"/><rect x="650" y="542" width="5" height="2" fill="#000"/><rect x="660" y="521" width="1" height="55" fill="#000"/><rect x="658" y="542" width="5" height="8" fill="#000"/><rect x="659" y="543" width="3" height="6" fill="#32CD32"/><rect x="668" y="522" width="1" height="37" fill="#000"/><rect x="666" y="550" width="5" height="1" fill="#000"/><rect x="676" y="530" width="1" height="38" fill="#000"/><rect x="674" y="556" width="5" height="5" fill="#000"/><rect x="675" y="557" width="3" height="3" fill="#FF0000"/><rect x="684" y="534" width="1" height="42" fill="#000"/><rect x="682" y="549" width="5" height="12" fill="#000"/><rect x="683" y="550" width="3" height="10" fill="#32CD32"/><rect x="692" y="545" width="1" height="67" fill="#000"/><rect x="690" y="551" width="5" height="47" fill="#000"/><rect x="691" y="552" width="3" height="45" fill="#FF0000"/><rect x="700" y="478" width="1" height="133" fill="#000"/><rect x="698" y="501" width="5" height="110" fill="#000"/><rect x="699" y="502" width="3" height="108" fill="#32CD32"/><rect x="708" y="436" width="1" height="75" fill="#000"/><rect x="706" y="436" width="5" height="67" fill="#000"/><rect x="707" y="437" width="3" height="65" fill="#32CD32"/></g><g clip-path="url(#clipL)"><polyline points="12.0,333.7 21.6,315.6 30.6,293.0 44.1,272.7 53.2,266.6 66.7,266.6 75.8,275.0 84.8,286.2 93.8,302.0 100.6,316.8 107.4,322.0 117.0,320.2 133.6,297.6 154.7,269.0 169.7,267.5 190.8,270.5 202.9,278.9 215.0,276.5 226.0,270.8 236.5,265.7 244.0,272.3 256.1,293.4 271.2,314.5 286.3,326.6 302.9,338.6 313.4,356.7 325.5,374.8 340.5,385.4 355.6,383.8 379.7,382.3 391.8,371.8 412.9,344.7 431.0,329.6 442.0,319.8 454.0,312.3 461.6,318.3 470.6,334.9 479.7,337.9 490.2,363.5 500.8,408.7 508.3,460.0 523.4,518.0 532.4,527.9 541.5,524.0 568.6,524.0 574.6,534.5 589.7,558.6 604.7,567.7 616.8,578.2 628.9,581.2 640.9,572.2 651.3,562.4 660.3,557.9 671.6,556.8 685.2,556.8 693.1,562.4 698.7,557.9 707.8,528.5" fill="none" stroke="#000" stroke-width="2" stroke-linejoin="round" /><polyline points="12.0,336.0 21.6,324.7 30.6,308.8 44.1,291.9 57.7,284.4 69.0,283.3 75.8,285.1 87.0,297.5 98.4,311.1 107.4,314.0 124.5,309.7 145.6,291.6 157.7,278.0 172.7,275.9 190.8,275.0 205.9,279.5 221.0,274.1 236.5,270.8 253.1,284.4 271.2,302.5 298.3,320.6 313.4,335.6 340.5,364.3 364.6,370.3 382.7,372.4 394.8,365.8 412.9,349.2 437.0,335.6 454.0,325.8 463.1,328.8 484.2,345.4 502.3,387.6 514.3,435.8 524.9,469.0 535.4,479.5 550.5,488.6 568.6,496.1 574.6,499.9 586.7,524.0 598.7,536.0 610.8,549.6 625.8,558.6 646.9,557.1 662.6,552.9 685.2,552.9 694.2,556.8 701.0,553.4 707.8,537.6" fill="none" stroke="#B01818" stroke-width="2" stroke-linejoin="round" /></g><polygon points="700.2,496.4 694.2,491.9 695.7,496.4 694.2,500.9" fill="#00FFFF" stroke="#fff" stroke-width="0.8"/><polygon points="700.2,528.3 694.2,523.8 695.7,528.3 694.2,532.8" fill="#00FFFF" stroke="#fff" stroke-width="0.8"/><line x1="700.7" y1="495.4" x2="706.6" y2="474.4" stroke="#0000FF" stroke-width="1.3" stroke-dasharray="2,2.5"/><polygon points="707.6,471.4 712.6,467.4 712.6,475.4" fill="#0000FF" stroke="#fff" stroke-width="0.8"/><rect x="705" y="496" width="7" height="1" fill="#0000FF"/><rect x="697" y="613" width="7" height="1" fill="#FF0000"/><rect x="697" y="379" width="7" height="1" fill="#0000FF"/><text x="30" y="179" class="ax" style="letter-spacing:-0.4px">USDCHF!,Daily</text><text x="116.5" y="179" class="ax" style="letter-spacing:0.4px">0.77885 0.78605 0.77797 0.78588</text><polygon points="720,165 732,165 726,171" fill="#B4B4B4"/><line x1="12" y1="709.5" x2="875" y2="709.5" stroke="#C0C0C0" stroke-dasharray="4,4"/><line x1="12" y1="766.5" x2="875" y2="766.5" stroke="#C0C0C0" stroke-dasharray="4,4"/><polyline points="12.5,740.4 20.5,727.3 28.5,712.3 36.5,703.8 44.5,701.0 52.5,702.9 60.5,713.2 68.5,729.2 76.5,750.8 84.5,766.7 92.5,776.1 100.5,775.2 108.5,770.5 116.5,755.5 124.5,734.8 132.5,715.1 140.5,704.8 148.5,701.0 156.5,702.0 164.5,708.5 172.5,724.5 180.5,751.7 188.5,758.3 196.5,761.1 204.5,758.3 212.5,756.4 220.5,751.7 228.5,735.7 236.5,720.7 244.5,721.7 252.5,739.5 260.5,762.0 268.5,767.1 276.5,768.6 284.5,766.7 292.5,764.8 300.5,760.5 308.5,761.1 316.5,765.8 324.5,772.4 332.5,772.4 340.5,767.7 348.5,758.3 356.5,740.4 364.5,723.5 372.5,718.3 380.5,719.4 388.5,723.5 396.5,723.5 404.5,714.5 412.5,703.8 420.5,703.3 428.5,708.2 436.5,714.2 444.5,715.7 452.5,717.5 460.5,720.7 468.5,735.7 476.5,750.8 484.5,763.0 492.5,766.7 500.5,773.8 508.5,777.6 516.5,777.0 524.5,775.7 532.5,768.6 540.5,752.6 548.5,732.0 556.5,717.0 564.5,715.1 572.5,723.5 580.5,737.6 588.5,754.5 596.5,757.3 604.5,753.6 612.5,750.2 620.5,747.0 628.5,740.4 636.5,729.2 644.5,720.7 652.5,714.5 660.5,714.2 668.5,718.9 676.5,729.2 684.5,740.4 692.5,747.0 700.5,745.1 708.5,739.0" fill="none" stroke="#FF0000" stroke-width="1.2" stroke-linejoin="round" stroke-dasharray="3,3"/><polyline points="12.5,727.3 20.5,708.5 28.5,702.5 36.5,700.1 44.5,699.5 52.5,711.3 60.5,729.2 68.5,755.5 76.5,772.4 84.5,777.0 92.5,778.0 100.5,772.4 108.5,760.2 116.5,740.4 124.5,718.9 132.5,700.6 140.5,700.1 148.5,701.0 156.5,704.4 164.5,720.7 172.5,746.1 180.5,773.3 188.5,757.0 196.5,755.5 204.5,758.3 212.5,757.3 220.5,741.4 228.5,716.0 236.5,711.9 244.5,732.9 252.5,756.4 260.5,771.4 268.5,768.2 276.5,768.6 284.5,763.9 292.5,762.0 300.5,753.2 308.5,766.7 316.5,772.4 324.5,778.4 332.5,770.5 340.5,762.0 348.5,748.9 356.5,731.0 364.5,711.3 372.5,714.2 380.5,726.9 388.5,726.0 396.5,717.0 404.5,700.6 412.5,697.3 420.5,710.0 428.5,710.0 436.5,722.2 444.5,713.2 452.5,714.5 460.5,731.0 468.5,757.3 476.5,762.0 484.5,765.8 492.5,769.5 500.5,778.0 508.5,780.4 516.5,774.2 524.5,774.2 532.5,760.2 540.5,736.7 548.5,715.7 556.5,712.3 564.5,716.4 572.5,721.7 580.5,742.3 588.5,766.3 596.5,759.2 604.5,748.3 612.5,747.4 620.5,747.4 628.5,741.4 636.5,724.5 644.5,716.0 652.5,709.1 660.5,713.2 668.5,721.7 676.5,734.8 684.5,743.3 692.5,760.7 700.5,733.0 708.5,715.1" fill="none" stroke="#20B2AA" stroke-width="1.2" stroke-linejoin="round" /><text x="16" y="703" class="ax">Stoch(5,3,3) 74.5505 51.5028</text><text x="878" y="701.5" class="ax">100</text><text x="878" y="713.5" class="ax">80</text><text x="878" y="770.5" class="ax">20</text><text x="878" y="782.5" class="ax">0</text><rect x="12" y="787" width="1" height="4" fill="#000"/><text x="11" y="802" class="ax">30 Oct 2025</text><rect x="108" y="787" width="1" height="4" fill="#000"/><text x="107" y="802" class="ax">17 Nov 2025</text><rect x="204" y="787" width="1" height="4" fill="#000"/><text x="203" y="802" class="ax">3 Dec 2025</text><rect x="300" y="787" width="1" height="4" fill="#000"/><text x="299" y="802" class="ax">19 Dec 2025</text><rect x="396" y="787" width="1" height="4" fill="#000"/><text x="395" y="802" class="ax">7 Jan 2026</text><rect x="492" y="787" width="1" height="4" fill="#000"/><text x="491" y="802" class="ax">23 Jan 2026</text><rect x="588" y="787" width="1" height="4" fill="#000"/><text x="587" y="802" class="ax">10 Feb 2026</text><rect x="684" y="787" width="1" height="4" fill="#000"/><text x="683" y="802" class="ax">26 Feb 2026</text>
<rect x="959.5" y="160.5" width="886" height="526" fill="none" stroke="#000" stroke-width="1"/><rect x="959.5" y="688.5" width="886" height="98" fill="none" stroke="#000" stroke-width="1"/><rect x="1845" y="176" width="4" height="1" fill="#000"/><text x="1852" y="179.7" class="ax">0.58525</text><rect x="1845" y="225" width="4" height="1" fill="#000"/><text x="1852" y="228.7" class="ax">0.58265</text><rect x="1845" y="274" width="4" height="1" fill="#000"/><text x="1852" y="277.7" class="ax">0.58005</text><rect x="1845" y="323" width="4" height="1" fill="#000"/><text x="1852" y="326.7" class="ax">0.57750</text><rect x="1845" y="372" width="4" height="1" fill="#000"/><text x="1852" y="375.7" class="ax">0.57490</text><rect x="1845" y="421" width="4" height="1" fill="#000"/><text x="1852" y="424.7" class="ax">0.57230</text><rect x="1845" y="470" width="4" height="1" fill="#000"/><text x="1852" y="473.7" class="ax">0.56970</text><rect x="1845" y="519" width="4" height="1" fill="#000"/><text x="1852" y="522.7" class="ax">0.56715</text><rect x="1845" y="568" width="4" height="1" fill="#000"/><text x="1852" y="571.7" class="ax">0.56455</text><rect x="1845" y="617" width="4" height="1" fill="#000"/><text x="1852" y="620.7" class="ax">0.56195</text><rect x="1845" y="666" width="4" height="1" fill="#000"/><text x="1852" y="669.7" class="ax">0.55935</text><rect x="960" y="402" width="885" height="1" fill="#C0C0C0"/><rect x="1847" y="395" width="56" height="14" fill="#000"/><text x="1852" y="406.5" class="ax" style="fill:#fff">0.57333</text><line x1="960" y1="291.5" x2="1845" y2="291.5" stroke="#FF4500" stroke-width="1" stroke-dasharray="9,6,3,6" shape-rendering="crispEdges"/><text x="969" y="289" class="ol">#9400537 tp</text><line x1="960" y1="465.5" x2="1845" y2="465.5" stroke="#FF4500" stroke-width="1" stroke-dasharray="9,6,3,6" shape-rendering="crispEdges"/><text x="969" y="463" class="ol">#9400537 buy 0.15</text><text x="1838" y="253" text-anchor="end" class="big">+33.6</text><clipPath id="clipR"><rect x="960" y="161" width="885" height="525"/></clipPath><g shape-rendering="crispEdges" clip-path="url(#clipR)"><rect x="960" y="457" width="1" height="48" fill="#000"/><rect x="958" y="493" width="5" height="5" fill="#000"/><rect x="959" y="494" width="3" height="3" fill="#FF0000"/><rect x="968" y="477" width="1" height="52" fill="#000"/><rect x="966" y="488" width="5" height="8" fill="#000"/><rect x="967" y="489" width="3" height="6" fill="#32CD32"/><rect x="976" y="369" width="1" height="124" fill="#000"/><rect x="974" y="404" width="5" height="83" fill="#000"/><rect x="975" y="405" width="3" height="81" fill="#32CD32"/><rect x="984" y="385" width="1" height="43" fill="#000"/><rect x="982" y="394" width="5" height="13" fill="#000"/><rect x="983" y="395" width="3" height="11" fill="#FF0000"/><rect x="992" y="376" width="1" height="48" fill="#000"/><rect x="990" y="401" width="5" height="6" fill="#000"/><rect x="991" y="402" width="3" height="4" fill="#32CD32"/><rect x="1000" y="362" width="1" height="69" fill="#000"/><rect x="998" y="376" width="5" height="52" fill="#000"/><rect x="999" y="377" width="3" height="50" fill="#32CD32"/><rect x="1008" y="358" width="1" height="40" fill="#000"/><rect x="1006" y="386" width="5" height="7" fill="#000"/><rect x="1007" y="387" width="3" height="5" fill="#FF0000"/><rect x="1016" y="372" width="1" height="48" fill="#000"/><rect x="1014" y="388" width="5" height="10" fill="#000"/><rect x="1015" y="389" width="3" height="8" fill="#32CD32"/><rect x="1024" y="378" width="1" height="74" fill="#000"/><rect x="1022" y="396" width="5" height="56" fill="#000"/><rect x="1023" y="397" width="3" height="54" fill="#FF0000"/><rect x="1032" y="389" width="1" height="65" fill="#000"/><rect x="1030" y="412" width="5" height="42" fill="#000"/><rect x="1031" y="413" width="3" height="40" fill="#32CD32"/><rect x="1040" y="363" width="1" height="79" fill="#000"/><rect x="1038" y="392" width="5" height="21" fill="#000"/><rect x="1039" y="393" width="3" height="19" fill="#32CD32"/><rect x="1048" y="379" width="1" height="77" fill="#000"/><rect x="1046" y="409" width="5" height="47" fill="#000"/><rect x="1047" y="410" width="3" height="45" fill="#FF0000"/><rect x="1056" y="432" width="1" height="58" fill="#000"/><rect x="1054" y="472" width="5" height="9" fill="#000"/><rect x="1055" y="473" width="3" height="7" fill="#FF0000"/><rect x="1064" y="462" width="1" height="117" fill="#000"/><rect x="1062" y="486" width="5" height="85" fill="#000"/><rect x="1063" y="487" width="3" height="83" fill="#FF0000"/><rect x="1072" y="526" width="1" height="95" fill="#000"/><rect x="1070" y="556" width="5" height="15" fill="#000"/><rect x="1071" y="557" width="3" height="13" fill="#32CD32"/><rect x="1080" y="513" width="1" height="53" fill="#000"/><rect x="1078" y="537" width="5" height="26" fill="#000"/><rect x="1079" y="538" width="3" height="24" fill="#32CD32"/><rect x="1088" y="421" width="1" height="143" fill="#000"/><rect x="1086" y="438" width="5" height="117" fill="#000"/><rect x="1087" y="439" width="3" height="115" fill="#32CD32"/><rect x="1096" y="388" width="1" height="67" fill="#000"/><rect x="1094" y="408" width="5" height="46" fill="#000"/><rect x="1095" y="409" width="3" height="44" fill="#32CD32"/><rect x="1104" y="382" width="1" height="67" fill="#000"/><rect x="1102" y="415" width="5" height="31" fill="#000"/><rect x="1103" y="416" width="3" height="29" fill="#FF0000"/><rect x="1112" y="388" width="1" height="80" fill="#000"/><rect x="1110" y="405" width="5" height="43" fill="#000"/><rect x="1111" y="406" width="3" height="41" fill="#32CD32"/><rect x="1120" y="381" width="1" height="62" fill="#000"/><rect x="1118" y="412" width="5" height="21" fill="#000"/><rect x="1119" y="413" width="3" height="19" fill="#32CD32"/><rect x="1128" y="390" width="1" height="50" fill="#000"/><rect x="1126" y="418" width="5" height="1" fill="#000"/><rect x="1136" y="397" width="1" height="36" fill="#000"/><rect x="1134" y="426" width="5" height="5" fill="#000"/><rect x="1135" y="427" width="3" height="3" fill="#32CD32"/><rect x="1144" y="384" width="1" height="49" fill="#000"/><rect x="1142" y="401" width="5" height="30" fill="#000"/><rect x="1143" y="402" width="3" height="28" fill="#32CD32"/><rect x="1152" y="336" width="1" height="92" fill="#000"/><rect x="1150" y="380" width="5" height="25" fill="#000"/><rect x="1151" y="381" width="3" height="23" fill="#32CD32"/><rect x="1160" y="365" width="1" height="33" fill="#000"/><rect x="1158" y="377" width="5" height="11" fill="#000"/><rect x="1159" y="378" width="3" height="9" fill="#32CD32"/><rect x="1168" y="355" width="1" height="46" fill="#000"/><rect x="1166" y="384" width="5" height="1" fill="#000"/><rect x="1176" y="374" width="1" height="39" fill="#000"/><rect x="1174" y="392" width="5" height="21" fill="#000"/><rect x="1175" y="393" width="3" height="19" fill="#FF0000"/><rect x="1184" y="350" width="1" height="72" fill="#000"/><rect x="1182" y="358" width="5" height="61" fill="#000"/><rect x="1183" y="359" width="3" height="59" fill="#32CD32"/><rect x="1192" y="228" width="1" height="143" fill="#000"/><rect x="1190" y="233" width="5" height="136" fill="#000"/><rect x="1191" y="234" width="3" height="134" fill="#32CD32"/><rect x="1200" y="186" width="1" height="96" fill="#000"/><rect x="1198" y="237" width="5" height="31" fill="#000"/><rect x="1199" y="238" width="3" height="29" fill="#32CD32"/><rect x="1208" y="206" width="1" height="47" fill="#000"/><rect x="1206" y="236" width="5" height="11" fill="#000"/><rect x="1207" y="237" width="3" height="9" fill="#32CD32"/><rect x="1216" y="230" width="1" height="65" fill="#000"/><rect x="1214" y="242" width="5" height="39" fill="#000"/><rect x="1215" y="243" width="3" height="37" fill="#FF0000"/><rect x="1224" y="276" width="1" height="83" fill="#000"/><rect x="1222" y="284" width="5" height="39" fill="#000"/><rect x="1223" y="285" width="3" height="37" fill="#FF0000"/><rect x="1232" y="301" width="1" height="56" fill="#000"/><rect x="1230" y="327" width="5" height="6" fill="#000"/><rect x="1231" y="328" width="3" height="4" fill="#32CD32"/><rect x="1240" y="287" width="1" height="55" fill="#000"/><rect x="1238" y="317" width="5" height="10" fill="#000"/><rect x="1239" y="318" width="3" height="8" fill="#32CD32"/><rect x="1248" y="297" width="1" height="39" fill="#000"/><rect x="1246" y="319" width="5" height="16" fill="#000"/><rect x="1247" y="320" width="3" height="14" fill="#32CD32"/><rect x="1256" y="278" width="1" height="75" fill="#000"/><rect x="1254" y="337" width="5" height="1" fill="#000"/><rect x="1264" y="311" width="1" height="45" fill="#000"/><rect x="1262" y="349" width="5" height="3" fill="#000"/><rect x="1263" y="350" width="3" height="1" fill="#32CD32"/><rect x="1272" y="311" width="1" height="48" fill="#000"/><rect x="1270" y="351" width="5" height="5" fill="#000"/><rect x="1271" y="352" width="3" height="3" fill="#32CD32"/><rect x="1280" y="331" width="1" height="45" fill="#000"/><rect x="1278" y="357" width="5" height="18" fill="#000"/><rect x="1279" y="358" width="3" height="16" fill="#32CD32"/><rect x="1288" y="336" width="1" height="51" fill="#000"/><rect x="1286" y="364" width="5" height="1" fill="#000"/><rect x="1296" y="325" width="1" height="53" fill="#000"/><rect x="1294" y="362" width="5" height="11" fill="#000"/><rect x="1295" y="363" width="3" height="9" fill="#32CD32"/><rect x="1304" y="310" width="1" height="89" fill="#000"/><rect x="1302" y="334" width="5" height="65" fill="#000"/><rect x="1303" y="335" width="3" height="63" fill="#32CD32"/><rect x="1312" y="312" width="1" height="48" fill="#000"/><rect x="1310" y="335" width="5" height="16" fill="#000"/><rect x="1311" y="336" width="3" height="14" fill="#FF0000"/><rect x="1320" y="301" width="1" height="67" fill="#000"/><rect x="1318" y="314" width="5" height="54" fill="#000"/><rect x="1319" y="315" width="3" height="52" fill="#32CD32"/><rect x="1328" y="286" width="1" height="48" fill="#000"/><rect x="1326" y="322" width="5" height="7" fill="#000"/><rect x="1327" y="323" width="3" height="5" fill="#FF0000"/><rect x="1336" y="334" width="1" height="11" fill="#000"/><rect x="1334" y="340" width="5" height="5" fill="#000"/><rect x="1335" y="341" width="3" height="3" fill="#FF0000"/><rect x="1344" y="289" width="1" height="69" fill="#000"/><rect x="1342" y="337" width="5" height="1" fill="#000"/><rect x="1352" y="307" width="1" height="72" fill="#000"/><rect x="1350" y="378" width="5" height="1" fill="#000"/><rect x="1360" y="329" width="1" height="65" fill="#000"/><rect x="1358" y="362" width="5" height="32" fill="#000"/><rect x="1359" y="363" width="3" height="30" fill="#32CD32"/><rect x="1368" y="325" width="1" height="47" fill="#000"/><rect x="1366" y="362" width="5" height="7" fill="#000"/><rect x="1367" y="363" width="3" height="5" fill="#32CD32"/><rect x="1376" y="334" width="1" height="51" fill="#000"/><rect x="1374" y="352" width="5" height="33" fill="#000"/><rect x="1375" y="353" width="3" height="31" fill="#32CD32"/><rect x="1384" y="329" width="1" height="34" fill="#000"/><rect x="1382" y="355" width="5" height="5" fill="#000"/><rect x="1383" y="356" width="3" height="3" fill="#FF0000"/><rect x="1392" y="346" width="1" height="54" fill="#000"/><rect x="1390" y="381" width="5" height="6" fill="#000"/><rect x="1391" y="382" width="3" height="4" fill="#FF0000"/><rect x="1400" y="332" width="1" height="68" fill="#000"/><rect x="1398" y="346" width="5" height="53" fill="#000"/><rect x="1399" y="347" width="3" height="51" fill="#32CD32"/><rect x="1408" y="315" width="1" height="54" fill="#000"/><rect x="1406" y="348" width="5" height="7" fill="#000"/><rect x="1407" y="349" width="3" height="5" fill="#FF0000"/><rect x="1416" y="301" width="1" height="64" fill="#000"/><rect x="1414" y="319" width="5" height="46" fill="#000"/><rect x="1415" y="320" width="3" height="44" fill="#32CD32"/><rect x="1424" y="304" width="1" height="43" fill="#000"/><rect x="1422" y="325" width="5" height="16" fill="#000"/><rect x="1423" y="326" width="3" height="14" fill="#FF0000"/><rect x="1432" y="343" width="1" height="50" fill="#000"/><rect x="1430" y="368" width="5" height="12" fill="#000"/><rect x="1431" y="369" width="3" height="10" fill="#FF0000"/><rect x="1440" y="383" width="1" height="84" fill="#000"/><rect x="1438" y="386" width="5" height="72" fill="#000"/><rect x="1439" y="387" width="3" height="70" fill="#FF0000"/><rect x="1448" y="351" width="1" height="118" fill="#000"/><rect x="1446" y="375" width="5" height="94" fill="#000"/><rect x="1447" y="376" width="3" height="92" fill="#32CD32"/><rect x="1456" y="359" width="1" height="65" fill="#000"/><rect x="1454" y="380" width="5" height="44" fill="#000"/><rect x="1455" y="381" width="3" height="42" fill="#FF0000"/><rect x="1464" y="371" width="1" height="123" fill="#000"/><rect x="1462" y="435" width="5" height="46" fill="#000"/><rect x="1463" y="436" width="3" height="44" fill="#FF0000"/><rect x="1472" y="482" width="1" height="79" fill="#000"/><rect x="1470" y="529" width="5" height="5" fill="#000"/><rect x="1471" y="530" width="3" height="3" fill="#FF0000"/><rect x="1480" y="524" width="1" height="131" fill="#000"/><rect x="1478" y="542" width="5" height="109" fill="#000"/><rect x="1479" y="543" width="3" height="107" fill="#FF0000"/><rect x="1488" y="491" width="1" height="182" fill="#000"/><rect x="1486" y="531" width="5" height="138" fill="#000"/><rect x="1487" y="532" width="3" height="136" fill="#32CD32"/><rect x="1496" y="496" width="1" height="65" fill="#000"/><rect x="1494" y="535" width="5" height="13" fill="#000"/><rect x="1495" y="536" width="3" height="11" fill="#32CD32"/><rect x="1504" y="479" width="1" height="72" fill="#000"/><rect x="1502" y="517" width="5" height="28" fill="#000"/><rect x="1503" y="518" width="3" height="26" fill="#32CD32"/><rect x="1512" y="433" width="1" height="122" fill="#000"/><rect x="1510" y="473" width="5" height="64" fill="#000"/><rect x="1511" y="474" width="3" height="62" fill="#32CD32"/><rect x="1520" y="465" width="1" height="51" fill="#000"/><rect x="1518" y="492" width="5" height="12" fill="#000"/><rect x="1519" y="493" width="3" height="10" fill="#FF0000"/><rect x="1528" y="475" width="1" height="52" fill="#000"/><rect x="1526" y="493" width="5" height="27" fill="#000"/><rect x="1527" y="494" width="3" height="25" fill="#32CD32"/><rect x="1536" y="484" width="1" height="49" fill="#000"/><rect x="1534" y="505" width="5" height="14" fill="#000"/><rect x="1535" y="506" width="3" height="12" fill="#FF0000"/><rect x="1544" y="469" width="1" height="61" fill="#000"/><rect x="1542" y="526" width="5" height="4" fill="#000"/><rect x="1543" y="527" width="3" height="2" fill="#FF0000"/><rect x="1552" y="497" width="1" height="76" fill="#000"/><rect x="1550" y="549" width="5" height="20" fill="#000"/><rect x="1551" y="550" width="3" height="18" fill="#FF0000"/><rect x="1560" y="518" width="1" height="74" fill="#000"/><rect x="1558" y="540" width="5" height="41" fill="#000"/><rect x="1559" y="541" width="3" height="39" fill="#32CD32"/><rect x="1568" y="489" width="1" height="79" fill="#000"/><rect x="1566" y="502" width="5" height="45" fill="#000"/><rect x="1567" y="503" width="3" height="43" fill="#32CD32"/><rect x="1576" y="492" width="1" height="87" fill="#000"/><rect x="1574" y="519" width="5" height="48" fill="#000"/><rect x="1575" y="520" width="3" height="46" fill="#FF0000"/><rect x="1584" y="542" width="1" height="53" fill="#000"/><rect x="1582" y="580" width="5" height="15" fill="#000"/><rect x="1583" y="581" width="3" height="13" fill="#FF0000"/><rect x="1592" y="549" width="1" height="50" fill="#000"/><rect x="1590" y="578" width="5" height="16" fill="#000"/><rect x="1591" y="579" width="3" height="14" fill="#32CD32"/><rect x="1600" y="545" width="1" height="45" fill="#000"/><rect x="1598" y="571" width="5" height="16" fill="#000"/><rect x="1599" y="572" width="3" height="14" fill="#32CD32"/><rect x="1608" y="555" width="1" height="26" fill="#000"/><rect x="1606" y="575" width="5" height="1" fill="#000"/><rect x="1616" y="524" width="1" height="80" fill="#000"/><rect x="1614" y="539" width="5" height="46" fill="#000"/><rect x="1615" y="540" width="3" height="44" fill="#32CD32"/><rect x="1624" y="513" width="1" height="32" fill="#000"/><rect x="1622" y="542" width="5" height="1" fill="#000"/><rect x="1632" y="515" width="1" height="59" fill="#000"/><rect x="1630" y="552" width="5" height="22" fill="#000"/><rect x="1631" y="553" width="3" height="20" fill="#32CD32"/><rect x="1640" y="528" width="1" height="51" fill="#000"/><rect x="1638" y="561" width="5" height="6" fill="#000"/><rect x="1639" y="562" width="3" height="4" fill="#FF0000"/><rect x="1648" y="540" width="1" height="50" fill="#000"/><rect x="1646" y="562" width="5" height="18" fill="#000"/><rect x="1647" y="563" width="3" height="16" fill="#32CD32"/><rect x="1656" y="527" width="1" height="73" fill="#000"/><rect x="1654" y="550" width="5" height="27" fill="#000"/><rect x="1655" y="551" width="3" height="25" fill="#32CD32"/><rect x="1664" y="544" width="1" height="68" fill="#000"/><rect x="1662" y="566" width="5" height="20" fill="#000"/><rect x="1663" y="567" width="3" height="18" fill="#FF0000"/><rect x="1672" y="459" width="1" height="168" fill="#000"/><rect x="1670" y="475" width="5" height="150" fill="#000"/><rect x="1671" y="476" width="3" height="148" fill="#32CD32"/><rect x="1680" y="400" width="1" height="96" fill="#000"/><rect x="1678" y="403" width="5" height="93" fill="#000"/><rect x="1679" y="404" width="3" height="91" fill="#32CD32"/></g><g clip-path="url(#clipR)"><polyline points="959.5,504.0 968.6,500.7 977.6,476.9 1000.2,438.5 1016.4,420.4 1025.0,426.1 1031.8,424.9 1040.4,417.0 1049.9,424.9 1056.6,434.0 1064.8,461.9 1072.2,481.7 1080.4,492.8 1089.6,479.2 1097.0,466.8 1106.9,459.4 1114.3,449.5 1121.8,442.1 1136.6,435.9 1150.4,418.1 1168.5,405.4 1179.0,406.6 1186.6,391.0 1194.1,360.8 1207.7,318.6 1216.7,310.2 1231.8,315.0 1246.9,317.1 1265.0,328.3 1276.0,334.4 1294.1,344.9 1306.1,343.4 1324.2,337.4 1345.3,337.4 1354.4,345.8 1366.4,349.5 1381.5,351.9 1393.5,357.9 1408.6,354.0 1420.7,348.0 1432.7,352.5 1440.3,372.1 1449.3,373.6 1456.8,382.6 1464.4,403.7 1474.9,439.9 1481.0,473.0 1488.0,484.4 1496.4,494.2 1504.8,499.2 1513.2,495.0 1527.2,495.0 1541.2,502.6 1552.4,516.6 1560.8,522.2 1568.4,518.7 1576.8,524.3 1585.2,541.1 1596.4,551.0 1607.6,557.4 1618.8,552.3 1630.0,551.0 1641.2,555.1 1655.2,555.1 1663.6,559.3 1672.0,542.5 1680.4,516.0" fill="none" stroke="#000" stroke-width="2" stroke-linejoin="round" /><polyline points="959.5,491.6 968.6,491.6 977.6,481.4 1000.2,449.8 1016.4,438.0 1025.0,438.0 1031.8,435.1 1040.4,430.1 1049.9,433.5 1056.6,438.5 1064.8,457.0 1080.4,476.8 1089.6,470.6 1099.5,463.1 1114.3,453.2 1135.3,442.2 1159.5,424.1 1177.5,418.1 1186.6,406.0 1198.6,372.9 1216.7,342.7 1231.8,339.7 1249.9,333.7 1265.0,336.7 1276.0,338.9 1294.1,344.9 1312.2,344.0 1327.2,338.9 1345.3,339.8 1357.4,346.4 1378.5,348.9 1393.5,354.0 1408.6,352.5 1420.7,348.0 1429.7,348.9 1441.8,365.4 1447.8,366.0 1456.8,372.1 1471.9,403.7 1481.0,435.4 1496.0,458.0 1502.0,464.8 1518.8,471.8 1532.8,477.4 1544.0,485.0 1556.6,500.6 1568.4,501.4 1582.4,517.3 1607.6,537.0 1624.4,537.0 1641.2,542.5 1658.0,546.7 1665.0,551.8 1672.0,542.5 1680.4,524.3" fill="none" stroke="#B01818" stroke-width="2" stroke-linejoin="round" /></g><polygon points="1672.2,465.3 1666.2,460.8 1667.7,465.3 1666.2,469.8" fill="#00FFFF" stroke="#fff" stroke-width="0.8"/><polygon points="1672.2,522 1666.2,517.5 1667.7,522 1666.2,526.5" fill="#00FFFF" stroke="#fff" stroke-width="0.8"/><line x1="1672.7" y1="464.3" x2="1678.8" y2="431" stroke="#0000FF" stroke-width="1.3" stroke-dasharray="2,2.5"/><polygon points="1679.8,428 1684.8,424 1684.8,432" fill="#0000FF" stroke="#fff" stroke-width="0.8"/><rect x="1677" y="465" width="7" height="1" fill="#0000FF"/><rect x="1669" y="639" width="7" height="1" fill="#FF0000"/><rect x="1669" y="291" width="7" height="1" fill="#0000FF"/><text x="978" y="175" class="ax" style="letter-spacing:-0.4px">CADCHF!,Daily</text><text x="1064.5" y="175" class="ax" style="letter-spacing:0.4px">0.56842 0.57349 0.56842 0.57333</text><polygon points="1687,161 1699,161 1693,167" fill="#B4B4B4"/><line x1="960" y1="709.5" x2="1845" y2="709.5" stroke="#C0C0C0" stroke-dasharray="4,4"/><line x1="960" y1="766.5" x2="1845" y2="766.5" stroke="#C0C0C0" stroke-dasharray="4,4"/><polyline points="960.5,720.7 968.5,727.3 976.5,725.4 984.5,719.8 992.5,713.8 1000.5,708.5 1008.5,706.7 1016.5,707.0 1024.5,719.8 1032.5,734.8 1040.5,748.0 1048.5,751.7 1056.5,755.5 1064.5,769.5 1072.5,772.4 1080.5,768.6 1088.5,751.7 1096.5,733.0 1104.5,717.0 1112.5,706.7 1120.5,706.3 1128.5,707.6 1136.5,714.2 1144.5,721.7 1152.5,725.4 1160.5,725.4 1168.5,727.3 1176.5,733.0 1184.5,736.7 1192.5,729.2 1200.5,717.0 1208.5,707.6 1216.5,708.5 1224.5,716.0 1232.5,732.0 1240.5,748.0 1248.5,758.3 1256.5,761.1 1264.5,762.0 1272.5,765.8 1280.5,769.5 1288.5,770.5 1296.5,767.7 1304.5,759.2 1312.5,745.7 1320.5,732.0 1328.5,725.7 1336.5,720.7 1344.5,726.7 1352.5,742.6 1360.5,757.5 1368.5,763.0 1376.5,759.0 1384.5,755.5 1392.5,751.5 1400.5,747.5 1408.5,744.6 1416.5,733.2 1424.5,724.7 1432.5,725.7 1440.5,739.6 1448.5,751.5 1456.5,759.0 1464.5,757.5 1472.5,762.4 1480.5,769.0 1488.5,770.4 1496.5,765.4 1504.5,751.5 1512.5,735.6 1520.5,721.3 1528.5,716.8 1536.5,719.7 1544.5,735.6 1552.5,753.5 1560.5,761.4 1568.5,759.4 1576.5,753.5 1584.5,747.5 1592.5,755.5 1600.5,767.4 1608.5,767.8 1616.5,761.4 1624.5,747.5 1632.5,733.6 1640.5,728.7 1648.5,730.7 1656.5,735.6 1664.5,740.6 1672.5,735.6 1680.5,725.7" fill="none" stroke="#FF0000" stroke-width="1.2" stroke-linejoin="round" stroke-dasharray="3,3"/><polyline points="960.5,729.6 968.5,731.1 976.5,721.7 984.5,713.8 992.5,708.5 1000.5,705.1 1008.5,706.3 1016.5,708.5 1024.5,738.6 1032.5,755.1 1040.5,750.8 1048.5,749.5 1056.5,758.3 1064.5,779.9 1072.5,771.4 1080.5,763.9 1088.5,736.7 1096.5,718.9 1104.5,703.3 1112.5,704.4 1120.5,707.6 1128.5,708.5 1136.5,719.8 1144.5,726.0 1152.5,726.0 1160.5,723.5 1168.5,732.0 1176.5,742.0 1184.5,738.2 1192.5,713.8 1200.5,703.3 1208.5,704.4 1216.5,715.1 1224.5,728.3 1232.5,748.0 1240.5,761.1 1248.5,762.0 1256.5,759.6 1264.5,763.0 1272.5,772.0 1280.5,774.2 1288.5,771.4 1296.5,764.8 1304.5,746.1 1312.5,731.1 1320.5,716.8 1328.5,719.7 1336.5,723.3 1344.5,735.6 1352.5,756.5 1360.5,763.0 1368.5,765.0 1376.5,753.5 1384.5,750.5 1392.5,751.5 1400.5,742.6 1408.5,738.6 1416.5,718.2 1424.5,722.7 1432.5,733.2 1440.5,761.8 1448.5,758.4 1456.5,757.1 1464.5,755.5 1472.5,769.4 1480.5,778.9 1488.5,766.4 1496.5,755.5 1504.5,733.6 1512.5,720.7 1520.5,710.2 1528.5,715.8 1536.5,733.6 1544.5,752.5 1552.5,768.0 1560.5,763.4 1568.5,745.5 1576.5,742.6 1584.5,752.5 1592.5,772.3 1600.5,771.4 1608.5,763.8 1616.5,749.1 1624.5,733.6 1632.5,719.3 1640.5,732.0 1648.5,739.2 1656.5,739.2 1664.5,744.0 1672.5,723.7 1680.5,706.8" fill="none" stroke="#20B2AA" stroke-width="1.2" stroke-linejoin="round" /><text x="964" y="703" class="ax">Stoch(5,3,3) 81.6950 62.9951</text><text x="1848" y="701.5" class="ax">100</text><text x="1848" y="713.5" class="ax">80</text><text x="1848" y="770.5" class="ax">20</text><text x="1848" y="782.5" class="ax">0</text><rect x="960" y="787" width="1" height="4" fill="#000"/><text x="959" y="802" class="ax">27 Oct 2025</text><rect x="1056" y="787" width="1" height="4" fill="#000"/><text x="1055" y="802" class="ax">12 Nov 2025</text><rect x="1152" y="787" width="1" height="4" fill="#000"/><text x="1151" y="802" class="ax">28 Nov 2025</text><rect x="1248" y="787" width="1" height="4" fill="#000"/><text x="1247" y="802" class="ax">16 Dec 2025</text><rect x="1344" y="787" width="1" height="4" fill="#000"/><text x="1343" y="802" class="ax">2 Jan 2026</text><rect x="1440" y="787" width="1" height="4" fill="#000"/><text x="1439" y="802" class="ax">20 Jan 2026</text><rect x="1536" y="787" width="1" height="4" fill="#000"/><text x="1535" y="802" class="ax">5 Feb 2026</text><rect x="1632" y="787" width="1" height="4" fill="#000"/><text x="1631" y="802" class="ax">23 Feb 2026</text>
</svg>

<!-- TABS -->
<div class="a" style="left:0;top:820px;width:1916px;height:1px;background:#404040"></div>
<div class="a" style="left:0;top:823px;width:1914px;height:1px;background:#000"></div>
<div class="a" style="left:1099px;top:822px;width:124px;height:25px;background:#fff;border:1px solid #000;border-top:0"></div>
<div class="tab" style="left:17px;color:#6D6D6D">CHFJPY!,Weekly</div>
<div class="tsep" style="left:135px"></div>
<div class="tab" style="left:149px;color:#6D6D6D">EURGBP!,Daily</div>
<div class="tsep" style="left:259px"></div>
<div class="tab" style="left:273.5px;color:#6D6D6D">EURNZD!,Daily</div>
<div class="tsep" style="left:387px"></div>
<div class="tab" style="left:400px;color:#6D6D6D">CHFJPY!,Daily</div>
<div class="tsep" style="left:504px"></div>
<div class="tab" style="left:517px;color:#6D6D6D">USDDKK!,Daily</div>
<div class="tsep" style="left:631px"></div>
<div class="tab" style="left:645px;color:#6D6D6D">USDDKK!,H4</div>
<div class="tsep" style="left:743px"></div>
<div class="tab" style="left:757px;color:#6D6D6D">USDDKK!,H1</div>
<div class="tsep" style="left:855px"></div>
<div class="tab" style="left:868px;color:#6D6D6D">USDDKK!,M15</div>
<div class="tsep" style="left:975px"></div>
<div class="tab" style="left:988px;color:#6D6D6D">USDCHF!,Daily</div>
<div class="tab" style="left:1112px;color:#000">CADCHF!,Daily</div>
<div class="tab" style="left:1237px;color:#6D6D6D">EURAUD!,Daily</div>
<div class="tsep" style="left:1350px"></div>
<div class="tab" style="left:1364px;color:#6D6D6D">AUDJPY!,Daily</div>
<div class="tsep" style="left:1471px"></div>
<svg class="a" style="left:1872px;top:828px" width="36" height="14"><path d="M9,2 L4,7 L9,12 Z" fill="#A0A0A0"/><path d="M27,2 L32,7 L27,12 Z" fill="#A0A0A0"/></svg>

<!-- TERMINAL -->
<div class="a" style="left:0;top:848px;width:1916px;height:1px;background:#FFF"></div>
<div class="a" style="left:0;top:871px;width:16px;height:58px;background:linear-gradient(#D4E1F0,#C4D5EA)"></div>
<svg class="a" style="left:2px;top:855px" width="10" height="10"><path d="M1,1 L9,9 M9,1 L1,9" stroke="#000" stroke-width="1.6"/></svg>
<div class="a" style="left:16px;top:853px;width:1894px;height:76px;background:#fff;border-left:1px solid #A0A0A0;border-top:1px solid #A0A0A0"></div>
<div class="a" style="left:17px;top:854px;width:1893px;height:26px;background:#FAFAFA;border-bottom:1px solid #E0E0E0"></div>
<div class="a" style="left:17px;top:905px;width:1893px;height:24px;background:#EBEBEB"></div>
<div class="csep" style="left:203px"></div>
<div class="csep" style="left:463px"></div>
<div class="csep" style="left:593px"></div>
<div class="csep" style="left:694px"></div>
<div class="csep" style="left:824px"></div>
<div class="csep" style="left:969px"></div>
<div class="csep" style="left:1112px"></div>
<div class="csep" style="left:1256px"></div>
<div class="csep" style="left:1400px"></div>
<div class="csep" style="left:1545px"></div>
<div class="csep" style="left:1688px"></div>
<div class="th" style="left:23px;letter-spacing:0.86px">Ordine</div>
<div class="th" style="right:1478.18px;letter-spacing:0.82px">Data/Orario</div>
<div class="th" style="right:1326.60px;letter-spacing:1.4px">Tipo</div>
<div class="th" style="right:1226.70px;letter-spacing:1.3px">Lotti</div>
<div class="th" style="right:1096.75px;letter-spacing:1.25px">Simbolo</div>
<div class="th" style="right:952.50px;letter-spacing:0.5px">Prezzo</div>
<div class="th" style="right:808.90px;letter-spacing:0.1px">S / L</div>
<div class="th" style="right:664.22px;letter-spacing:0.78px">Take profit</div>
<div class="th" style="right:520.50px;letter-spacing:0.5px">Prezzo</div>
<div class="th" style="right:376.45px;letter-spacing:0.55px">Commissione</div>
<div class="th" style="right:236.17px;letter-spacing:0.83px">Swap</div>
<div class="th" style="right:11.00px;letter-spacing:1.0px">Profitto</div>
<div class="a" style="left:450px;top:864px;font-size:10px;color:#888">&#8260;</div>
<div class="td" style="left:44px;top:884px;text-align:left;letter-spacing:0.4px">9400537</div>
<div class="td" style="right:1455.6px;top:884px;letter-spacing:0.4px">2026.03.02 23:45:47</div>
<div class="td" style="right:1324.6px;top:884px;letter-spacing:0.4px">buy</div>
<div class="td" style="right:1224.6px;top:884px;letter-spacing:0.4px">0.15</div>
<div class="td" style="right:1094.6px;top:884px;letter-spacing:0.4px">cadchf!</div>
<div class="td" style="right:950.6px;top:884px;letter-spacing:0.4px">0.56997</div>
<div class="td" style="right:805.6px;top:884px;letter-spacing:0.4px">0.56997</div>
<div class="td" style="right:661.6px;top:884px;letter-spacing:0.4px">0.57916</div>
<div class="td" style="right:517.6px;top:884px;letter-spacing:0.4px">0.57333</div>
<div class="td" style="right:373.6px;top:884px;letter-spacing:0.4px">-0.90</div>
<div class="td" style="right:229.6px;top:884px;letter-spacing:0.4px">0.29</div>
<div class="td" style="right:34.6px;top:884px;letter-spacing:0.4px">55.28</div>
<svg class="a" style="left:19px;top:883px" width="22" height="22"><path d="M2.5,1.5 L12,1.5 L16.5,6 L16.5,17.5 L2.5,17.5 Z" fill="#F8F8F8" stroke="#6E6E6E"/><path d="M12,1.5 L12,6 L16.5,6" fill="none" stroke="#6E6E6E"/><circle cx="14" cy="17" r="4.5" fill="#1E8FE0" stroke="#0F5FA8" stroke-width="0.8"/><circle cx="13" cy="15.5" r="1.5" fill="#8CCBFA"/></svg>
<svg class="a" style="left:1890px;top:887px" width="14" height="14"><path d="M1,1 L13,13 M13,1 L1,13" stroke="#6E6E6E" stroke-width="1.6"/></svg>
<div class="td" style="left:44px;top:909px;text-align:left;letter-spacing:0.4px">9400536</div>
<div class="td" style="right:1455.6px;top:909px;letter-spacing:0.4px">2026.03.02 23:45:52</div>
<div class="td" style="right:1324.6px;top:909px;letter-spacing:0.4px">buy</div>
<div class="td" style="right:1224.6px;top:909px;letter-spacing:0.4px">0.11</div>
<div class="td" style="right:1094.6px;top:909px;letter-spacing:0.4px">usdchf!</div>
<div class="td" style="right:950.6px;top:909px;letter-spacing:0.4px">0.77944</div>
<div class="td" style="right:805.6px;top:909px;letter-spacing:0.4px">0.77944</div>
<div class="td" style="right:661.6px;top:909px;letter-spacing:0.4px">0.79210</div>
<div class="td" style="right:517.6px;top:909px;letter-spacing:0.4px">0.78588</div>
<div class="td" style="right:373.6px;top:909px;letter-spacing:0.4px">-0.66</div>
<div class="td" style="right:229.6px;top:909px;letter-spacing:0.4px">1.07</div>
<div class="td" style="right:34.6px;top:909px;letter-spacing:0.4px">77.71</div>
<svg class="a" style="left:19px;top:908px" width="22" height="22"><path d="M2.5,1.5 L12,1.5 L16.5,6 L16.5,17.5 L2.5,17.5 Z" fill="#F8F8F8" stroke="#6E6E6E"/><path d="M12,1.5 L12,6 L16.5,6" fill="none" stroke="#6E6E6E"/><circle cx="14" cy="17" r="4.5" fill="#1E8FE0" stroke="#0F5FA8" stroke-width="0.8"/><circle cx="13" cy="15.5" r="1.5" fill="#8CCBFA"/></svg>
<svg class="a" style="left:1890px;top:912px" width="14" height="14"><path d="M1,1 L13,13 M13,1 L1,13" stroke="#6E6E6E" stroke-width="1.6"/></svg>
</body></html>
